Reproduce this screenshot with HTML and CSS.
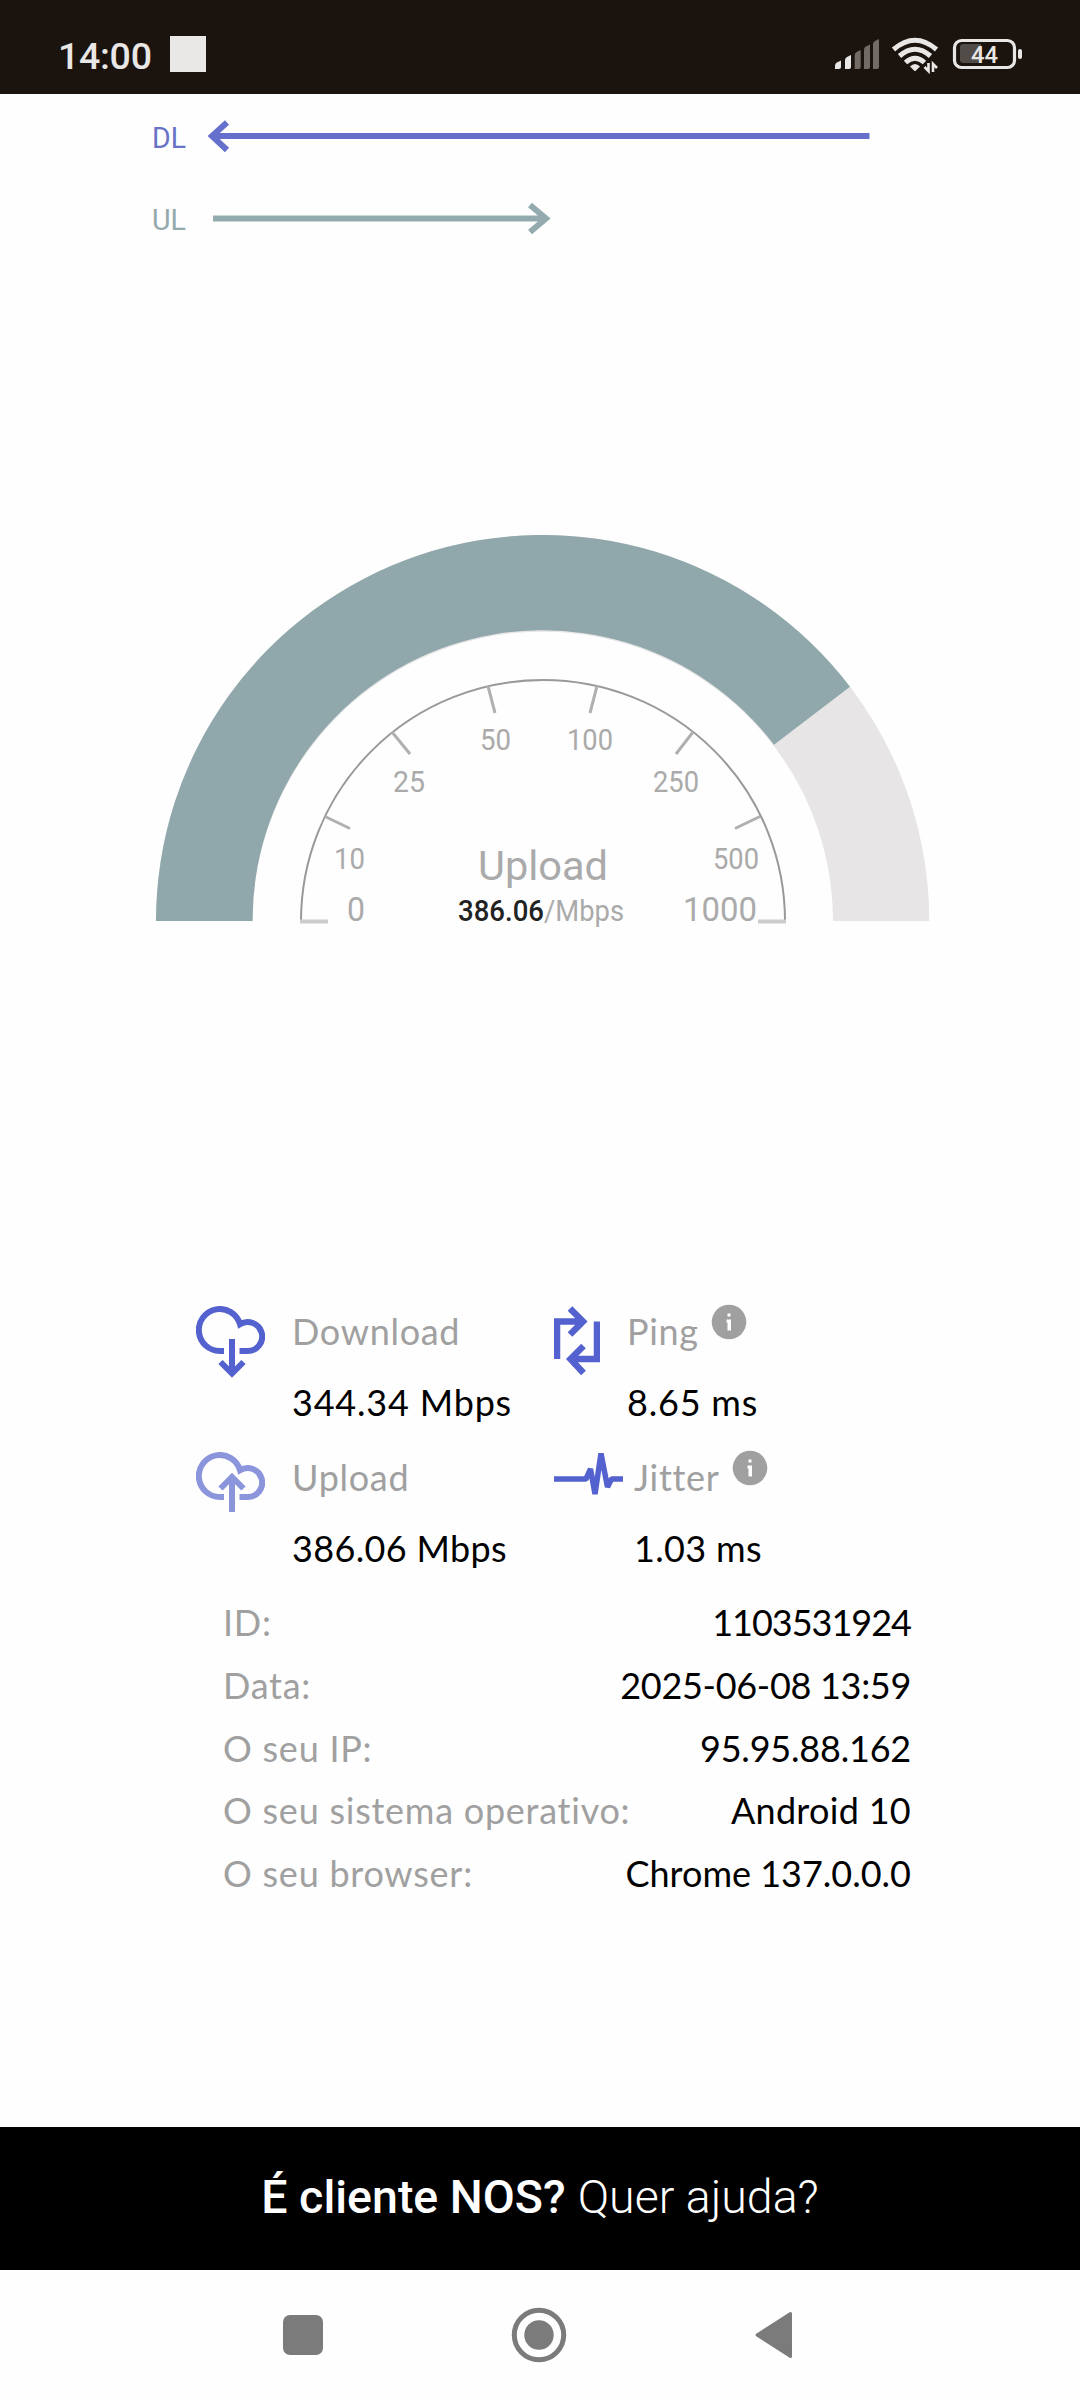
FILE: index.html
```html
<!DOCTYPE html>
<html lang="pt">
<head>
    <meta charset="UTF-8">
    <meta name="viewport" content="width=device-width, initial-scale=1.0">
    <title>Speed Test | NOS</title>
    <link rel="stylesheet" href="styles.css">
</head>
<body>
    <header class="status-bar">
        <span class="clock">14:00</span>
        <span class="notification"></span>
        <svg class="status-icons" width="190" height="44" viewBox="834 34 190 44">
            <!-- Mobile signal -->
            <g fill="#e9e7e5">
                <path d="M835 69v-3.500q0-2 2-3l4-2v6.500q0 2-2 2z"/>
                <path d="M845 69v-9q0-2 2-3l4-2v12q0 2-2 2z"/>
            </g>
            <g fill="#706b67">
                <path d="M854.700 69v-14q0-2 2-3l4-2v17q0 2-2 2z"/>
                <path d="M864 69v-19.500q0-2 2-3l4-2v22.500q0 2-2 2z"/>
                <path d="M873 69v-25q0-2 2-3l4-2v28q0 2-2 2z"/>
            </g>
            <!-- Wifi -->
            <g fill="none" stroke="#e9e7e5" stroke-width="5">
                <path d="M893.500 49.500Q915 31 936.500 49.500"/>
                <path d="M899.500 56Q915 42.500 930.500 56"/>
                <path d="M905.500 62.500Q915 54 924.500 62.500"/>
            </g>
            <path d="M910 66.500q5-5 10 0l-4 4q-1 1-2 0z" fill="#e9e7e5"/>
            <path d="M928.500 63v8l-4-4M933 72v-8l4 4" fill="none" stroke="#e9e7e5" stroke-width="2.600"/>
            <!-- Battery -->
            <rect x="954.500" y="40.500" width="60" height="27" rx="7" fill="none" stroke="#e9e7e5" stroke-width="3.200"/>
            <path d="M981 44h-18q-3 0-3 3v13q0 3 3 3h18z" fill="#524c48"/>
            <rect x="1018" y="49" width="4" height="10" rx="2" fill="#e9e7e5"/>
            <text x="971" y="63" class="battery-text" textLength="27" lengthAdjust="spacingAndGlyphs">44</text>
        </svg>
    </header>

    <main>
        <section class="arrows">
            <svg width="1080" height="166" viewBox="0 94 1080 166">
                <g class="arrow-dl">
                    <text x="152" y="148" textLength="34" lengthAdjust="spacingAndGlyphs">DL</text>
                    <path d="M869.500 136H212M227 122.500L212 136L227 150"/>
                </g>
                <g class="arrow-ul">
                    <text x="152" y="230" textLength="34" lengthAdjust="spacingAndGlyphs">UL</text>
                    <path d="M213 218.500H546M530 205L546 218.500L530 232"/>
                </g>
            </svg>
        </section>

        <section class="gauge">
            <svg width="780" height="400" viewBox="153 533 780 400">
                <path d="M156 921A386.650 386 0 0 1 929.300 921H833A290.200 289.500 0 0 0 252.600 921Z" fill="#e7e5e6"/>
                <path d="M156 921A386.650 386 0 0 1 850 686.800L774 744.800A290.200 289.500 0 0 0 252.600 921Z" fill="#90a8ac"/>
                <path d="M301 921A242 241 0 0 1 785 921" fill="none" stroke="#999" stroke-width="2"/>
                <path class="ticks" d="M325 816.500l25 12M392 732l18 22M488 686l7 27M597 686l-7 27M693 732l-17 22M760 816.500l-25 12"/>
                <path d="M300 921.500h28M786 921.500h-28" stroke="#ccc" stroke-width="4"/>
                <g class="scale">
                    <text x="347" y="921" class="end" textLength="18" lengthAdjust="spacingAndGlyphs">0</text>
                    <text x="334" y="869" textLength="31" lengthAdjust="spacingAndGlyphs">10</text>
                    <text x="393" y="792" textLength="32" lengthAdjust="spacingAndGlyphs">25</text>
                    <text x="480" y="750" textLength="31" lengthAdjust="spacingAndGlyphs">50</text>
                    <text x="567" y="750" textLength="46" lengthAdjust="spacingAndGlyphs">100</text>
                    <text x="653" y="792" textLength="46" lengthAdjust="spacingAndGlyphs">250</text>
                    <text x="713" y="869" textLength="46" lengthAdjust="spacingAndGlyphs">500</text>
                    <text x="683" y="921" class="end" textLength="74" lengthAdjust="spacingAndGlyphs">1000</text>
                    <text x="478" y="880" class="mode" textLength="130" lengthAdjust="spacingAndGlyphs">Upload</text>
                    <text x="458" y="921" class="speed" textLength="86" lengthAdjust="spacingAndGlyphs">386.06</text>
                    <text x="544" y="921" textLength="80" lengthAdjust="spacingAndGlyphs">/Mbps</text>
                </g>
            </svg>
        </section>

        <section class="results">
            <div class="result">
                <svg class="icon" width="69" height="72" viewBox="0 0 69 72">
                    <g fill="none" stroke="#5362ce" stroke-width="6">
                        <path d="M28 45H24A21 21 0 1 1 44 18.200A14.500 14.500 0 1 1 51.500 45H43.500"/>
                        <path d="M36 33V67M24.500 56L36 67.500L47.500 56"/>
                    </g>
                </svg>
                <div class="result-text">
                    <div class="label">Download</div>
                    <div class="value wide">344.34 Mbps</div>
                </div>
            </div>
            <div class="result">
                <svg class="icon" width="46" height="72" viewBox="0 0 46 72">
                    <g fill="none" stroke="#5362ce" stroke-width="6.500">
                        <path d="M3 53V15.500H30M16 2.500L29 15.500L16 28.500"/>
                        <path d="M43 15.500V53H16M29.500 40L16.500 53L29.500 67"/>
                    </g>
                </svg>
                <div class="result-text">
                    <div class="label">Ping <span class="info"><svg width="36" height="36" viewBox="0 0 36 36"><circle cx="18" cy="18" r="17.300" fill="#a0a0a0"/><path d="M16.500 9.500h3v3h-3zM15.500 15.500h4.500v11h-3.500v-8h-1z" fill="#fff"/></svg></span></div>
                    <div class="value wide">8.65 ms</div>
                </div>
            </div>
            <div class="result">
                <svg class="icon" width="69" height="72" viewBox="0 0 69 72">
                    <g fill="none" stroke="#8b95dc" stroke-width="6">
                        <path d="M28 45H24A21 21 0 1 1 44 18.200A14.500 14.500 0 1 1 51.500 45H43.500"/>
                        <path d="M36 60V25M24.500 36.500L36 25L47.500 36.500"/>
                    </g>
                </svg>
                <div class="result-text">
                    <div class="label">Upload</div>
                    <div class="value">386.06 Mbps</div>
                </div>
            </div>
            <div class="result jitter">
                <svg class="icon" width="69" height="72" viewBox="0 0 69 72">
                    <path d="M0 27H32L36.500 17L41 42L47 1.500L53.500 35L57.500 27H69" fill="none" stroke="#5362ce" stroke-width="5.500" stroke-linejoin="bevel"/>
                </svg>
                <div class="result-text">
                    <div class="label">Jitter <span class="info"><svg width="36" height="36" viewBox="0 0 36 36"><circle cx="18" cy="18" r="17.300" fill="#a0a0a0"/><path d="M16.500 9.500h3v3h-3zM15.500 15.500h4.500v11h-3.500v-8h-1z" fill="#fff"/></svg></span></div>
                    <div class="value">1.03 ms</div>
                </div>
            </div>
        </section>

        <section class="details">
            <div class="row"><span>ID:</span><span class="data id">1103531924</span></div>
            <div class="row"><span>Data:</span><span class="data date">2025-06-08 13:59</span></div>
            <div class="row"><span>O seu IP:</span><span class="data ip">95.95.88.162</span></div>
            <div class="row"><span>O seu sistema operativo:</span><span class="data system">Android 10</span></div>
            <div class="row"><span>O seu browser:</span><span class="data">Chrome 137.0.0.0</span></div>
        </section>
    </main>

    <footer class="help">
        <strong>É cliente NOS?</strong><span>Quer ajuda?</span>
    </footer>

    <nav class="nav-bar">
        <svg width="1080" height="130" viewBox="0 2270 1080 130" fill="#7b7b7b">
            <rect x="283" y="2315" width="40" height="40" rx="7"/>
            <circle cx="539" cy="2335" r="24.700" fill="none" stroke="#7b7b7b" stroke-width="5"/>
            <circle cx="539" cy="2335" r="14.700"/>
            <path d="M757 2335L790.500 2313.500V2356.500Z" stroke="#7b7b7b" stroke-width="3" stroke-linejoin="round"/>
        </svg>
    </nav>
</body>
</html>
```
FILE: styles.css
```css
body {
    margin: 0;
    width: 1080px;
    height: 2400px;
    display: flex;
    flex-direction: column;
    background: #fefefe;
    color: #000;
    font-family: Lato, sans-serif;
    overflow: hidden;
}
svg {
    display: block;
    flex: none;
}
.status-bar {
    height: 94px;
    box-sizing: border-box;
    padding: 14px 56px 0 58px;
    display: flex;
    align-items: center;
    background: #1b130e;
    color: #e9e7e5;
    font-family: Roboto, sans-serif;
}
.clock {
    width: 112px;
    margin-top: 3px;
    font-size: 37.5px;
    font-weight: 500;
    letter-spacing: -0.3px;
}
.notification {
    width: 36px;
    height: 36px;
    background: #e9e8e6;
}
.status-icons {
    margin-top: 4px;
    margin-left: auto;
}
.battery-text {
    font-size: 24px;
    font-weight: 500;
    fill: #e9e7e5;
}
main {
    flex: 1;
}
/* Download / upload arrows */
.arrows {
    height: 439px;
    font-family: Roboto, sans-serif;
    font-size: 30px;
}
.arrows path {
    fill: none;
    stroke-width: 6;
}
.arrow-dl {
    fill: #6873c5;
}
.arrow-dl path {
    stroke: #6470cc;
}
.arrow-ul {
    fill: #93a9ac;
}
.arrow-ul path {
    stroke: #93abaf;
}
/* Gauge */
.gauge {
    height: 773px;
    padding-left: 153px;
}
.ticks {
    fill: none;
    stroke: #b0b0b0;
    stroke-width: 3;
}
.scale {
    fill: #aaa;
    font-family: Roboto, sans-serif;
    font-size: 29px;
}
.scale .end {
    font-size: 33px;
}
.scale .mode {
    font-size: 41px;
}
.scale .speed {
    fill: #222;
    font-weight: 500;
}
/* Test results */
.results {
    display: grid;
    grid-template-columns: 358px 400px;
    grid-auto-rows: 146px;
    padding-left: 196px;
    font-size: 36px;
}
.result {
    display: flex;
    align-items: flex-start;
    gap: 27px;
}
.result.jitter {
    gap: 11px;
}
.result-text {
    white-space: nowrap;
}
.label {
    display: flex;
    height: 71px;
    line-height: 50px;
    color: #a0a0a0;
    letter-spacing: 0.7px;
}
.value {
    line-height: 50px;
    letter-spacing: 0.35px;
}
.value.wide {
    letter-spacing: 0.8px;
}
.info {
    margin: -2px 0 0 12px;
}
/* Connection details */
.details {
    padding: 0 169px 0 223px;
    font-size: 36px;
}
.row {
    display: flex;
    justify-content: space-between;
    height: 62.75px;
    line-height: 49px;
    color: #a0a0a0;
    letter-spacing: 0.75px;
}
.data {
    color: #000;
    letter-spacing: 0;
}
.data.id {
    letter-spacing: -1px;
}
.data.date {
    letter-spacing: -0.3px;
}
.data.ip {
    letter-spacing: -0.2px;
}
.data.system {
    letter-spacing: 0.3px;
}
.help {
    height: 143px;
    box-sizing: border-box;
    padding-bottom: 3px;
    display: flex;
    align-items: center;
    justify-content: center;
    gap: 12px;
    background: #000;
    color: #fff;
    font-family: Roboto, sans-serif;
    font-size: 46.5px;
    font-weight: 300;
}
.help strong {
    font-weight: 500;
}
.nav-bar {
    height: 130px;
}
```
